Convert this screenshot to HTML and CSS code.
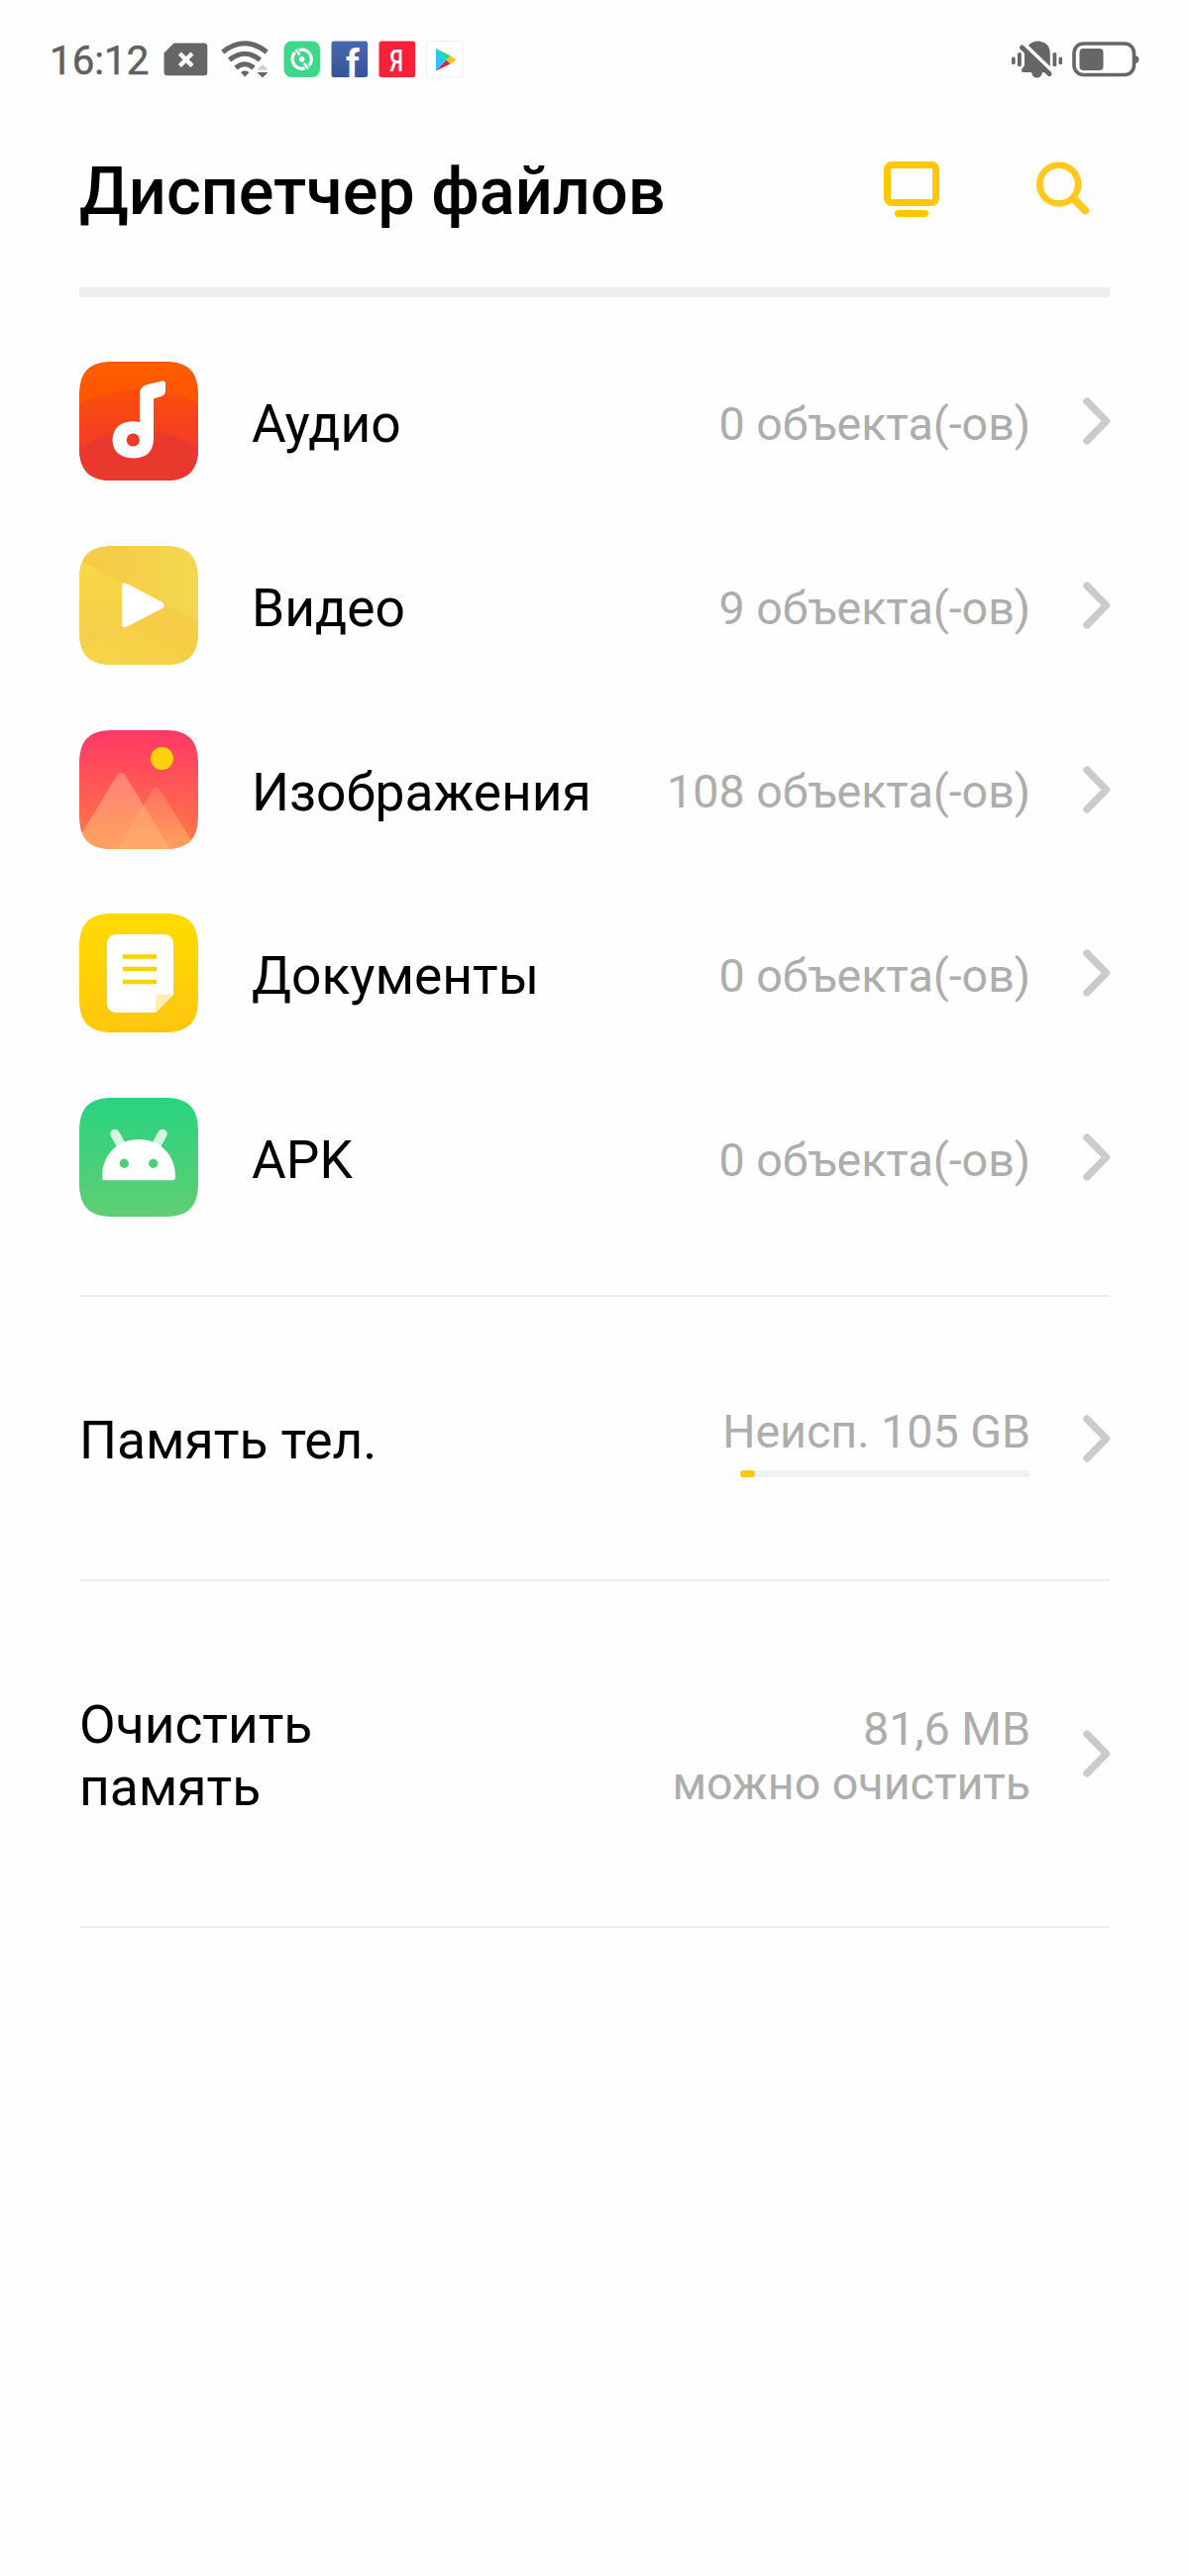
FILE: index.html
```html
<!DOCTYPE html>
<html lang="ru">
<head>
<meta charset="utf-8">
<title>Диспетчер файлов</title>
<link rel="stylesheet" href="styles.css">
</head>
<body>
<svg width="0" height="0" class="defs" aria-hidden="true">
  <defs>
    <symbol id="chevron" viewBox="0 0 28 48"><path d="M4 4.2 23.5 24 4 43.8" fill="none" stroke="#cbcbcb" stroke-width="7.4" stroke-linecap="round" stroke-linejoin="round"/></symbol>
    <clipPath id="tile"><path d="M0 34C0 10 10 0 34 0H86C110 0 120 10 120 34V86C120 110 110 120 86 120H34C10 120 0 110 0 86Z"/></clipPath>
    <linearGradient id="g-audio" x1="0" y1="0" x2="0" y2="1"><stop offset="0" stop-color="#ff5c00"/><stop offset=".35" stop-color="#ff5500"/></linearGradient>
    <linearGradient id="g-audio2" x1="0" y1="0" x2="0" y2="1"><stop offset="0" stop-color="#fb4f0c"/><stop offset=".5" stop-color="#f53f20"/></linearGradient>
    <linearGradient id="g-video" x1="0" y1="0" x2="1" y2="0"><stop offset="0" stop-color="#f6c944"/><stop offset="1" stop-color="#f4d74f"/></linearGradient>
    <linearGradient id="g-video2" x1="0" y1="0" x2="0" y2="1"><stop offset="0" stop-color="#f7d845"/><stop offset="1" stop-color="#f2cf4c"/></linearGradient>
    <linearGradient id="g-video3" x1="0" y1="1" x2="1" y2="0"><stop offset="0" stop-color="#f5d648"/><stop offset="1" stop-color="#f7c945"/></linearGradient>
    <linearGradient id="g-image" x1="0" y1="0" x2="0" y2="1"><stop offset="0" stop-color="#ff3866"/><stop offset="1" stop-color="#ff7c43"/></linearGradient>
    <linearGradient id="g-peak" x1="0" y1="0" x2="0" y2="1"><stop offset="0" stop-color="#ffa08a" stop-opacity=".6"/><stop offset="1" stop-color="#ffae68" stop-opacity=".75"/></linearGradient>
    <linearGradient id="g-peak2" x1="0" y1="0" x2="0" y2="1"><stop offset="0" stop-color="#ff9070" stop-opacity=".45"/><stop offset="1" stop-color="#ffb870" stop-opacity=".6"/></linearGradient>
    <linearGradient id="g-doc" x1="0" y1="0" x2="0" y2="1"><stop offset="0" stop-color="#ffdc00"/><stop offset="1" stop-color="#ffc60e"/></linearGradient>
    <linearGradient id="g-apk" x1="0" y1="0" x2="0" y2="1"><stop offset="0" stop-color="#29d382"/><stop offset="1" stop-color="#60ce72"/></linearGradient>
    <linearGradient id="g-fb" x1="0" y1="0" x2="0" y2="1"><stop offset="0" stop-color="#4868ad"/><stop offset="1" stop-color="#35549b"/></linearGradient>
  </defs>
</svg>

<div class="screen">
  <div class="status">
    <div class="status-left">
      <span class="clock">16:12</span>
      <svg class="sim" viewBox="0 0 45 34" width="45" height="34"><path d="M10.5 .5H41Q44.300 .5 44.300 4V30Q44.300 33.200 41 33.200H4Q.5 33.200 .5 30V10.500Z" fill="#666"/><path d="m18 12.500 9.400 9.400m0-9.400-9.400 9.400" stroke="#fff" stroke-width="4.400" stroke-linecap="square"/></svg>
      <svg class="wifi" viewBox="0 0 48 38" width="48" height="38"><g fill="none" stroke="#666" stroke-width="5"><path d="M1.800 11.500Q24-6 46.200 11.500"/><path d="M8.500 19.500Q24 7 39.500 19.500"/><path d="M15 27.500Q24 20 33 27.500"/></g><path d="M20 32Q24 28.500 28.500 32L24.200 36.500Z" fill="#666"/><path d="M36.500 29.500 42 24 47.500 29.500Z" fill="#ccc"/><path d="M36.500 32H47.500L42 37.500Z" fill="#666"/></svg>
      <svg class="app first-app" viewBox="0 0 38 38" width="38" height="38"><rect x=".5" y=".5" width="36.500" height="36.500" rx="8" fill="#3fd88a"/><circle cx="18.700" cy="18.700" r="9.600" fill="none" stroke="#fff" stroke-width="3.200" stroke-dasharray="25 5.160" transform="rotate(-108 18.700 18.700)"/><path d="M12.500 9 16.500 14.500M25 28.500 21 23" stroke="#fff" stroke-width="2.600"/><circle cx="18.700" cy="18.700" r="2.800" fill="#fff"/></svg>
      <svg class="app" viewBox="0 0 38 38" width="38" height="38"><rect x=".5" y=".5" width="36.500" height="36.500" rx="2.500" fill="url(#g-fb)"/><text x="15" y="36.800" class="fb">f</text></svg>
      <svg class="app" viewBox="0 0 38 38" width="38" height="38"><rect x=".5" y=".5" width="36.500" height="36.500" rx="2.500" fill="#fb2036"/><text transform="translate(11.300 30.500) scale(.7 1)" class="ya">Я</text></svg>
      <svg class="app" viewBox="0 0 38 38" width="38" height="38"><rect x=".5" y=".5" width="36.500" height="36.500" rx="3" fill="#fff" stroke="#efefef"/><path d="M10 8V30.500L20.500 19.500Z" fill="#29c5f6"/><path d="M10 8 25 15.500 20.500 19.500Z" fill="#1fd885"/><path d="M10 30.500 20.500 19.500 24.500 23.500Z" fill="#d8283f"/><path d="m20.500 19.500 4.500-4 5.500 4-5.800 4Z" fill="#fbc117"/></svg>
    </div>
    <div class="status-right">
      <svg viewBox="0 0 52 40" width="52" height="40"><g fill="#666"><rect x="0" y="17.500" width="3.600" height="7.500" rx="1.500"/><rect x="6" y="13" width="3.800" height="14" rx="1.500"/><rect x="41.500" y="13" width="3.800" height="14" rx="1.500"/><rect x="47.500" y="17.500" width="3.600" height="7.500" rx="1.500"/><path d="M17 6Q20 1.500 27 1.500 38.500 2.500 38.800 14V27Z"/><path d="M13 10V26L9.800 30.500Q10 33 12 33H20Q21 38.500 25.500 38.500 30 38.500 31 33H36Z"/></g><path d="M10.500 8 38 34.500" stroke="#666" stroke-width="5" stroke-linecap="round"/></svg>
      <svg viewBox="0 0 68 36" width="68" height="36"><rect x="2" y="2" width="60.500" height="31.500" rx="9.500" fill="#fff" stroke="#666" stroke-width="3.600"/><rect x="7.500" y="7" width="24" height="22" rx="4" fill="#666"/><path d="M64 14Q67.500 15 67.500 18T64 22Z" fill="#666"/></svg>
    </div>
  </div>

  <header class="header">
    <h1 class="title">Диспетчер файлов</h1>
    <div class="actions">
      <svg viewBox="0 0 56 57" width="56" height="57"><rect x="3.500" y="3.500" width="49" height="38" rx="4.500" fill="none" stroke="#ffc800" stroke-width="7"/><path d="M14.500 52.500H41.500" stroke="#ffc800" stroke-width="7" stroke-linecap="round"/></svg>
      <svg viewBox="0 0 54 55" width="54" height="55"><circle cx="22.700" cy="23" r="19.400" fill="none" stroke="#ffc91c" stroke-width="6.600"/><path d="M38 38 49.400 49.500" stroke="#ffc91c" stroke-width="7.800" stroke-linecap="round"/></svg>
    </div>
  </header>
  <div class="bar"></div>

  <ul class="categories">
    <li class="row">
      <svg class="icon" viewBox="0 0 120 120"><g clip-path="url(#tile)"><path fill="url(#g-audio)" d="M0 0H120V120H0Z"/><path fill="url(#g-audio2)" d="M0 42Q60 14 120 42V120H0Z"/><path fill="#e9382d" d="M0 86Q60 54 120 86V120H0Z"/></g><path fill="#fff" d="M61 61V32Q61 25 69 23L84 19.500Q87 19.200 87 22V29Q87 33.500 83 35L75 37.500V79Q74 97.500 54 97.500 34 96.500 33.500 79 34.500 61 54 60.300 58 60.300 61 61Z"/><circle cx="54.300" cy="79" r="6.600" fill="#ed3d29"/></svg>
      <span class="label">Аудио</span><span class="value">0 объекта(-ов)</span><svg class="chevron"><use href="#chevron"/></svg>
    </li>
    <li class="row">
      <svg class="icon" viewBox="0 0 120 120"><g clip-path="url(#tile)"><path fill="url(#g-video)" d="M0 0H120V120H0Z"/><path fill="url(#g-video2)" d="M0 14 64 48 58 73 0 106Z"/><path fill="url(#g-video3)" d="M0 106 85 60 120 77V120H0Z"/></g><path fill="#fff" d="M43 41Q43 36 48 38L84 57Q87.500 60 84 63L48 81.500Q43 84 43 79Z"/></svg>
      <span class="label">Видео</span><span class="value">9 объекта(-ов)</span><svg class="chevron"><use href="#chevron"/></svg>
    </li>
    <li class="row">
      <svg class="icon" viewBox="0 0 120 120"><g clip-path="url(#tile)"><path fill="url(#g-image)" d="M0 0H120V120H0Z"/><path fill="url(#g-peak2)" d="M38 120 74 60Q77.500 55.500 81 60L115 114V120Z"/><path fill="url(#g-peak)" d="M0 108 38.500 45Q42 40.500 46 45L92 120H0Z"/></g><circle cx="83.500" cy="28.500" r="11.500" fill="#ffd00c"/></svg>
      <span class="label">Изображения</span><span class="value">108 объекта(-ов)</span><svg class="chevron"><use href="#chevron"/></svg>
    </li>
    <li class="row">
      <svg class="icon" viewBox="0 0 120 120"><path clip-path="url(#tile)" fill="url(#g-doc)" d="M0 0H120V120H0Z"/><path fill="#fff" d="M38 21H85Q95 21 95 31V82L77 100H38Q28 100 28 90V31Q28 21 38 21Z"/><path fill="#ffeeb0" d="M77 100V85Q77 82 80 82H95Z"/><path d="M44 43.500H78M44 56H78M44 69H78" stroke="#ffd106" stroke-width="4.300"/></svg>
      <span class="label">Документы</span><span class="value">0 объекта(-ов)</span><svg class="chevron"><use href="#chevron"/></svg>
    </li>
    <li class="row">
      <svg class="icon" viewBox="0 0 120 120"><path clip-path="url(#tile)" fill="url(#g-apk)" d="M0 0H120V120H0Z"/><path d="M36 36.500 43 49M84 36.500 77 49" stroke="#d7f5e2" stroke-width="9.500" stroke-linecap="round"/><path fill="#fff" d="M23 80C23 57 39 42 60 42S97 57 97 80Q97 83.300 94 83.300H26Q23 83.300 23 80Z"/><circle cx="45.300" cy="66.300" r="4.600" fill="#4ecf7a"/><circle cx="74.700" cy="66.300" r="4.600" fill="#4ecf7a"/></svg>
      <span class="label">APK</span><span class="value">0 объекта(-ов)</span><svg class="chevron"><use href="#chevron"/></svg>
    </li>
  </ul>

  <section class="section storage">
    <span class="label">Память тел.</span>
    <div class="usage">
      <span class="value">Неисп. 105 GB</span>
      <div class="track"><div class="fill" style="width:5%"></div></div>
    </div>
    <svg class="chevron"><use href="#chevron"/></svg>
  </section>
  <section class="section clean">
    <span class="label">Очистить<br>память</span>
    <span class="value">81,6 MB<br>можно очистить</span>
    <svg class="chevron"><use href="#chevron"/></svg>
  </section>
</div>
</body>
</html>
```
FILE: styles.css
```css
* { box-sizing: border-box; }
body {
  margin: 0;
  background: #fefefe;
  font-family: Roboto, "Liberation Sans", sans-serif;
  color: #000;
}
svg { display: block; flex: none; }
.defs { position: absolute; }
.screen { width: 1200px; height: 2600px; overflow: hidden; }

.status {
  height: 120px;
  padding: 0 50px 0 50px;
  display: flex;
  justify-content: space-between;
  align-items: center;
}
.status-left, .status-right { display: flex; align-items: center; }
.status-left { gap: 10px; }
.status-right { gap: 9px; }
.clock {
  width: 105px;
  font-size: 40.300px;
  line-height: 46px;
  padding-top: 3px;
  color: #606060;
  -webkit-text-stroke: .5px #606060;
  white-space: nowrap;
}
.wifi { margin-left: 3px; }
.app { overflow: visible; }
.first-app { margin-left: 5px; }
.fb { font: 700 38px Roboto, sans-serif; fill: #fff; }
.ya { font: 500 32px Roboto, sans-serif; fill: #fff; }

.header {
  height: 170px;
  padding: 0 100px 0 80px;
  display: flex;
  justify-content: space-between;
}
.title {
  margin: 0;
  padding-top: 33px;
  font-size: 66.600px;
  line-height: 80px;
  font-weight: 500;
  white-space: nowrap;
}
.actions { display: flex; gap: 98px; padding-top: 43px; }
.bar { margin: 0 80px; height: 10px; background: #eee; }

.categories { list-style: none; margin: 0 80px; padding: 32.500px 0 0; height: 1007px; }
.row { display: flex; align-items: center; height: 185.650px; }
.icon { width: 120px; height: 120px; margin-right: 54px; }
.label { flex: 1; font-size: 53.300px; line-height: 63px; white-space: nowrap; }
.value {
  font-size: 46.600px;
  line-height: 55px;
  color: #adadad;
  text-align: right;
  white-space: nowrap;
}
.row .label { padding-top: 7px; }
.row .value { padding-top: 6.500px; }
.chevron { width: 28px; height: 48px; margin-left: 53px; margin-right: -1px; }

.section { margin: 0 80px; display: flex; align-items: center; border-top: 2px solid #eee; }
.storage { height: 287px; }
.storage .label { padding-top: 6px; }
.usage { display: flex; flex-direction: column; align-items: flex-end; padding-top: 6px; }
.track { width: 293px; height: 7px; margin-top: 11px; border-radius: 4px; background: #f2f2f2; }
.fill { height: 7px; border-radius: 3px; background: #ffc81a; }
.clean { height: 352px; border-bottom: 2px solid #eee; }
.clean .label { padding-top: 5px; }
.clean .value { padding-top: 5px; }
```
